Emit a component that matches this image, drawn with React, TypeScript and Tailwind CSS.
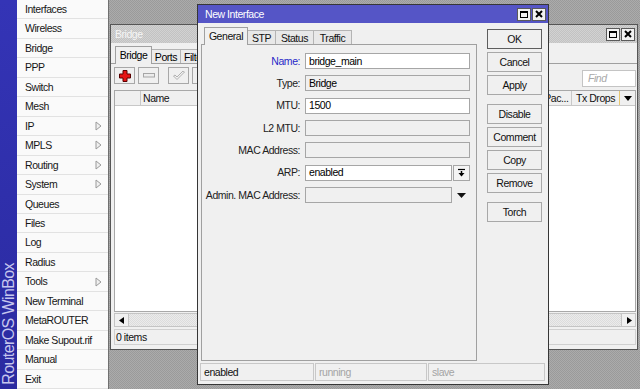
import React from "react";

const menu: [string, boolean][] = [
  ["Interfaces", false],
  ["Wireless", false],
  ["Bridge", false],
  ["PPP", false],
  ["Switch", false],
  ["Mesh", false],
  ["IP", true],
  ["MPLS", true],
  ["Routing", true],
  ["System", true],
  ["Queues", false],
  ["Files", false],
  ["Log", false],
  ["Radius", false],
  ["Tools", true],
  ["New Terminal", false],
  ["MetaROUTER", false],
  ["Make Supout.rif", false],
  ["Manual", false],
  ["Exit", false],
];

function SubArrow() {
  return (
    <svg width="7" height="10" viewBox="0 0 7 10">
      <path d="M1 1 L1 9 L6 5 Z" fill="#f0f0f0" stroke="#9a9a9a" strokeWidth="1" />
    </svg>
  );
}

function WinButtons() {
  return (
    <div className="flex gap-[1px]">
      <div className="w-[14px] h-[13px] bg-[#f2f2f2] border border-[#5a5a5a] flex items-center justify-center">
        <div className="w-[8px] h-[7px] border border-black border-t-2" />
      </div>
      <div className="w-[14px] h-[13px] bg-[#f2f2f2] border border-[#5a5a5a] flex items-center justify-center">
        <svg width="8" height="8" viewBox="0 0 8 8">
          <path d="M1 1L7 7M7 1L1 7" stroke="#000" strokeWidth="2" />
        </svg>
      </div>
    </div>
  );
}

function ToolButton({ children }: { children: React.ReactNode }) {
  return (
    <div className="w-[21px] h-[17px] bg-[#f0f0f0] border border-[#a8a8a8] flex items-center justify-center">
      {children}
    </div>
  );
}

function Field({ label, value, blue, gray, arp, admin }: { label: string; value?: string; blue?: boolean; gray?: boolean; arp?: boolean; admin?: boolean }) {
  return (
    <div className="h-[16px] flex items-center">
      <div className={`w-[98px] text-right ${blue ? "text-[#2828c8]" : "text-[#222]"}`}>{label}</div>
      <div className="ml-[5px] w-[165px] flex items-center gap-[1px] h-full">
        <div className={`flex-1 h-full border border-[#a6a6a6] flex items-center pl-[3px] text-black ${gray ? "bg-[#f0f0f0]" : "bg-white"}`}>
          {value}
        </div>
        {arp && (
          <div className="w-[17px] h-full border border-[#a6a6a6] bg-[#f4f4f4] flex items-center justify-center">
            <svg width="7" height="9" viewBox="0 0 7 9">
              <path d="M0 1.5H7" stroke="#000" strokeWidth="1.2" />
              <path d="M3.5 3V5" stroke="#000" strokeWidth="1.5" />
              <path d="M0.5 5H6.5L3.5 8.5Z" fill="#000" />
            </svg>
          </div>
        )}
        {admin && (
          <div className="w-[17px] h-full flex items-center justify-center">
            <svg width="9" height="5" viewBox="0 0 9 5">
              <path d="M0 0H9L4.5 5Z" fill="#111" />
            </svg>
          </div>
        )}
      </div>
    </div>
  );
}

function DlgButton({ label, main, extra }: { label: string; main?: boolean; extra?: boolean }) {
  return (
    <div
      className={`h-[20px] flex items-center justify-center bg-[#f0f0f0] border text-[#111] ${
        main ? "border-[#5e5e5e]" : "border-[#a8a8a8]"
      } ${extra ? "mt-[6px]" : ""}`}
    >
      {label}
    </div>
  );
}

export default function App() {
  return (
    <div className="w-[640px] h-[389px] flex overflow-hidden font-['Liberation_Sans',Arial,sans-serif] text-[10px] tracking-[-0.45px] leading-none">
      {/* blue brand bar */}
      <div className="w-[17px] h-full bg-gradient-to-b from-[#3434b6] to-[#2a2aa0] flex flex-col justify-end items-center pb-[4px]">
        <div className="[writing-mode:vertical-rl] rotate-180 text-[16px] tracking-[-0.6px] text-[#c6c6ee] whitespace-nowrap">
          RouterOS WinBox
        </div>
      </div>

      {/* menu */}
      <div className="w-[92px] h-full flex flex-col bg-[#fafafa] border-r border-[#707070] text-[10.5px]">
        {menu.map(([name, sub]) => (
          <div key={name} className="flex-1 flex items-center justify-between pl-[8px] pr-[6px] border-b border-[#e2e2e2] text-[#161616]">
            <span>{name}</span>
            {sub && <SubArrow />}
          </div>
        ))}
      </div>

      {/* desktop */}
      <div className="flex-1 relative bg-[repeating-conic-gradient(#9a9a9a_0%_25%,#ababab_0%_50%)] bg-[length:2px_2px]">
        {/* Bridge window */}
        <div className="absolute left-[1px] top-[24px] w-[528px] h-[326px] border border-[#555] bg-[#f0f0f0] flex flex-col">
          <div className="h-[18px] flex items-center justify-between pl-[4px] pr-[2px] bg-[repeating-conic-gradient(#c2c2c2_0%_25%,#d2d2d2_0%_50%)] bg-[length:2px_2px] text-[#f6f6f6]">
            <span className="text-[10.5px]">Bridge</span>
            <WinButtons />
          </div>
          <div className="flex-1 flex flex-col pb-[4px]">
            <div className="mt-[3px] h-[18px] -mb-[1px] flex items-end pl-[4px]">
              <div className="relative z-10 h-[18px] w-[37px] border border-b-0 border-[#a0a0a0] bg-[#f0f0f0] flex items-center justify-center text-[10.5px]">
                Bridge
              </div>
              <div className="h-[15px] w-[29px] border border-l-0 border-b-0 border-[#b4b4b4] bg-[#ececec] flex items-center justify-center text-[10.5px]">
                Ports
              </div>
              <div className="h-[15px] w-[40px] border border-l-0 border-b-0 border-[#b4b4b4] bg-[#ececec] flex items-center pl-[3px] text-[10.5px]">
                Filters
              </div>
            </div>
            <div className="flex-1 flex flex-col border-t border-[#a0a0a0] pl-[3px] pr-[1px] pt-[3px]">
              <div className="h-[20px] flex items-start">
                <div className="flex gap-[3px]">
                  <ToolButton>
                    <svg width="12" height="12" viewBox="0 0 12 12">
                      <path d="M4 0.5H8V4H11.5V8H8V11.5H4V8H0.5V4H4Z" fill="#e41414" stroke="#5a0000" strokeWidth="1" />
                    </svg>
                  </ToolButton>
                  <ToolButton>
                    <svg width="12" height="5" viewBox="0 0 12 5">
                      <rect x="0.5" y="0.5" width="11" height="3.5" fill="#ececec" stroke="#a6a6a6" />
                    </svg>
                  </ToolButton>
                </div>
                <div className="flex gap-[3px] ml-[9px]">
                  <ToolButton>
                    <svg width="12" height="10" viewBox="0 0 12 10">
                      <path d="M0.5 5L4 8.5L11.5 1L10 0L4 6L2 4Z" fill="#f2f2f2" stroke="#b0b0b0" strokeWidth="1" />
                    </svg>
                  </ToolButton>
                  <ToolButton>
                    <svg width="10" height="10" viewBox="0 0 10 10">
                      <path d="M1 1L9 9M9 1L1 9" stroke="#b0b0b0" strokeWidth="2" />
                    </svg>
                  </ToolButton>
                </div>
                <div className="ml-auto mt-[3px] w-[54px] h-[17px] bg-white border border-[#c4c4c4] flex items-center pl-[5px] italic text-[#a8a8a8] text-[10.5px]">
                  Find
                </div>
              </div>
              <div className="mt-[3px] flex-1 flex flex-col border border-[#a8a8a8] bg-white">
                <div className="h-[15px] flex bg-[#f0f0f0] border-b border-[#c8c8c8] text-[#111] text-[10.5px]">
                  <div className="w-[26px] border-r border-[#c8c8c8]" />
                  <div className="flex-1 flex items-center pl-[2px] border-r border-[#c8c8c8]">Name</div>
                  <div className="w-[45px] flex items-center pl-[4px] border-r border-[#c8c8c8] whitespace-nowrap overflow-hidden">Tx Pac...</div>
                  <div className="w-[48px] flex items-center pl-[4px] border-r border-[#e8c870]">Tx Drops</div>
                  <div className="w-[15px] flex items-center justify-center">
                    <svg width="8" height="5" viewBox="0 0 8 5">
                      <path d="M0 0H8L4 5Z" fill="#000" />
                    </svg>
                  </div>
                </div>
                <div className="flex-1" />
              </div>
              <div className="mt-[1px] h-[14px] flex border border-[#c4c4c4] bg-[repeating-conic-gradient(#dcdcdc_0%_25%,#ebebeb_0%_50%)] bg-[length:2px_2px]">
                <div className="w-[14px] h-full bg-[#f0f0f0] border-r border-[#c4c4c4] flex items-center justify-center">
                  <svg width="6" height="7" viewBox="0 0 6 7">
                    <path d="M0 3.5L5 0V7Z" fill="#000" />
                  </svg>
                </div>
                <div className="flex-1" />
                <div className="w-[14px] h-full bg-[#f0f0f0] border-l border-[#c4c4c4] flex items-center justify-center">
                  <svg width="6" height="7" viewBox="0 0 6 7">
                    <path d="M6 3.5L1 0V7Z" fill="#000" />
                  </svg>
                </div>
              </div>
              <div className="mt-[2px] h-[16px] border border-[#d0d0d0] bg-[#f0f0f0] flex items-center pl-[1px] text-[#111] text-[10.5px]">
                0 items
              </div>
            </div>
          </div>
        </div>

        {/* New Interface dialog */}
        <div className="absolute left-[88px] top-[4px] w-[352px] h-[381px] border border-[#363636] bg-[#f0f0f0] flex flex-col">
          <div className="h-[18px] flex items-center justify-between pl-[7px] pr-[2px] bg-[#5555c6] text-white">
            <span className="text-[10.5px]">New Interface</span>
            <WinButtons />
          </div>
          <div className="flex pt-[4px] pl-[3px] pr-[6px] gap-[10px]">
            <div className="w-[276px] flex flex-col">
              <div className="h-[18px] -mb-[1px] flex items-end pl-[3px] text-[10.5px] text-[#111]">
                <div className="relative z-10 h-[18px] w-[44px] border border-b-0 border-[#a0a0a0] bg-[#f0f0f0] flex items-center justify-center">
                  General
                </div>
                <div className="h-[15px] w-[28px] border border-l-0 border-b-0 border-[#b4b4b4] bg-[#e8e8e8] flex items-center justify-center">
                  STP
                </div>
                <div className="h-[15px] w-[38px] border border-l-0 border-b-0 border-[#b4b4b4] bg-[#e8e8e8] flex items-center justify-center">
                  Status
                </div>
                <div className="h-[15px] w-[38px] border border-l-0 border-b-0 border-[#b4b4b4] bg-[#e8e8e8] flex items-center justify-center">
                  Traffic
                </div>
              </div>
              <div className="h-[317px] border border-[#a0a0a0] pt-[8px] flex flex-col gap-[6.35px] text-[10.5px]">
                <Field label="Name:" value="bridge_main" blue />
                <Field label="Type:" value="Bridge" gray />
                <Field label="MTU:" value="1500" />
                <Field label="L2 MTU:" gray />
                <Field label="MAC Address:" gray />
                <Field label="ARP:" value="enabled" arp />
                <Field label="Admin. MAC Address:" gray admin />
              </div>
            </div>
            <div className="w-[55px] pt-[2px] flex flex-col gap-[3px] text-[10.5px]">
              <DlgButton label="OK" main />
              <DlgButton label="Cancel" />
              <DlgButton label="Apply" />
              <DlgButton label="Disable" extra />
              <DlgButton label="Comment" />
              <DlgButton label="Copy" />
              <DlgButton label="Remove" />
              <DlgButton label="Torch" extra />
            </div>
          </div>
          <div className="mt-[2px] h-[18px] ml-[2px] mr-[3px] flex gap-[1px] text-[10.5px]">
            <div className="w-[114px] border border-[#c8c8c8] flex items-center pl-[3px] text-[#111]">enabled</div>
            <div className="w-[112px] border border-[#c8c8c8] flex items-center pl-[3px] text-[#a4a4a4]">running</div>
            <div className="flex-1 border border-[#c8c8c8] flex items-center pl-[3px] text-[#a4a4a4]">slave</div>
          </div>
        </div>
      </div>
    </div>
  );
}
